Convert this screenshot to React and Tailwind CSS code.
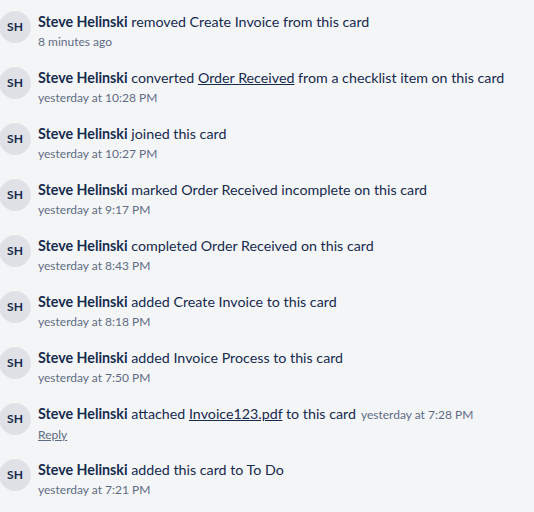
import React from 'react';

const items = [
    { action: <>removed Create Invoice from this card</>, time: '8 minutes ago' },
    { action: <>converted <a className="underline">Order Received</a> from a checklist item on this card</>, time: 'yesterday at 10:28 PM' },
    { action: <>joined this card</>, time: 'yesterday at 10:27 PM' },
    { action: <>marked Order Received incomplete on this card</>, time: 'yesterday at 9:17 PM' },
    { action: <>completed Order Received on this card</>, time: 'yesterday at 8:43 PM' },
    { action: <>added Create Invoice to this card</>, time: 'yesterday at 8:18 PM' },
    { action: <>added Invoice Process to this card</>, time: 'yesterday at 7:50 PM' },
    { action: <>attached <a className="underline">Invoice123.pdf</a> to this card</>, time: 'yesterday at 7:28 PM', attachment: true },
    { action: <>added this card to To Do</>, time: 'yesterday at 7:21 PM' },
];

function ActivityRow({ item }) {
    return (
        <div className="flex h-[56px]">
            <div className="w-[32px] h-[32px] mt-[11px] ml-[-1px] shrink-0 rounded-full bg-[#dfe1e6] flex items-center justify-center text-[12px] font-bold text-[#172b4d]">
                SH
            </div>
            <div className="ml-[7px] pt-[11px]">
                <p className="text-[14.25px] leading-[21px] text-[#172b4d] whitespace-nowrap">
                    <span className="font-bold">Steve Helinski</span> {item.action}
                    {item.attachment && <span className="ml-[5px] text-[12px] text-[#5e6c84]">{item.time}</span>}
                </p>
                {item.attachment ? (
                    <p className="text-[12px] leading-[20px] text-[#5e6c84] underline">Reply</p>
                ) : (
                    <p className="text-[12px] leading-[20px] text-[#5e6c84]">{item.time}</p>
                )}
            </div>
        </div>
    );
}

export default function App() {
    return (
        <div className="w-[534px] h-[512px] bg-[#f4f5f7] overflow-hidden font-['Lato',sans-serif]">
            {items.map((item, i) => (
                <ActivityRow key={i} item={item} />
            ))}
        </div>
    );
}
